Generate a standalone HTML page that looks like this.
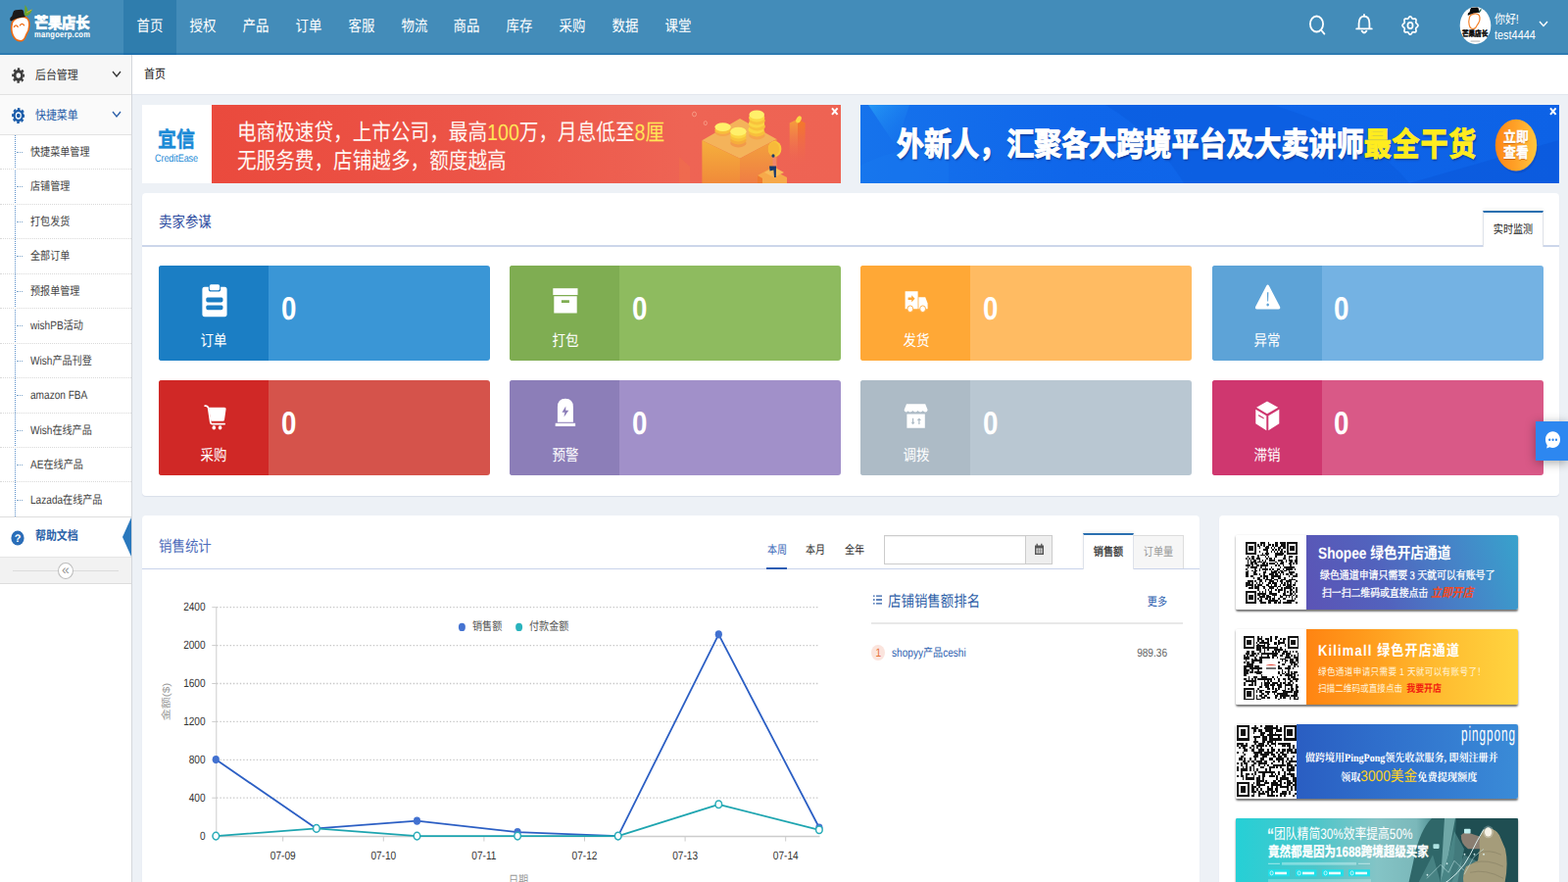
<!DOCTYPE html>
<html lang="zh"><head>
<meta charset="utf-8">
<title>首页</title>
<style>
*{box-sizing:border-box;margin:0;padding:0}
html,body{width:1600px;height:900px;overflow:hidden}
body{font-family:"Liberation Sans","Noto Sans CJK SC",sans-serif;font-size:12px;color:#333;background:#edf1f6;position:relative;text-rendering:geometricPrecision}
.abs{position:absolute}
.nw{white-space:nowrap}
/* header */
#hdr{position:absolute;left:0;top:0;width:1600px;height:56px;background:#438cb9;border-bottom:2px solid #2d7bb1}
#hdr .act{position:absolute;left:126px;top:0;width:54px;height:56px;background:#2f7dad;border-bottom:2px solid #1f70ab}
#hdr .nav{position:absolute;top:0;height:56px;line-height:56px;width:54px;text-align:center;color:#fff;font-size:16px;white-space:nowrap;transform:scaleX(.8408)}
/* sidebar */
#side{position:absolute;left:0;top:56px;width:135px;height:844px;background:#fff;border-right:1px solid #d4d7dc}
#side .top{position:absolute;left:0;width:134px;height:41px;border-bottom:1px solid #e2e2e2;background:#f7f7f7}
#side .top .t{position:absolute;left:36px;top:0;line-height:41.6px;font-size:13px;color:#333;white-space:nowrap}
#side .sub{position:absolute;left:0;width:134px;height:35.45px;border-bottom:1px dotted #d9d9d9}
#side .sub .t{position:absolute;left:31px;top:0;line-height:35px;font-size:12px;color:#444;white-space:nowrap}
#side .sub .d{position:absolute;left:17px;top:17px;width:6px;border-top:1px dotted #7fa6cc}
/* breadcrumb */
#crumb{position:absolute;left:135px;top:56px;width:1465px;height:41px;background:#fff;border-bottom:1px solid #e3e7ee}
.sx{display:inline-block;transform:scaleX(.8408);transform-origin:0 50%;white-space:nowrap}
.sxc{display:inline-block;transform:scaleX(.8408);transform-origin:50% 50%;white-space:nowrap}
.panel{position:absolute;background:#fff;border-radius:3px;box-shadow:0 1px 1px rgba(120,140,180,.18)}
</style>
</head>
<body>

<!-- HEADER -->
<div id="hdr">
  <div class="act"></div>
  <div class="nav" style="left:126px">首页</div>
  <div class="nav" style="left:180px">授权</div>
  <div class="nav" style="left:234px">产品</div>
  <div class="nav" style="left:288px">订单</div>
  <div class="nav" style="left:342px">客服</div>
  <div class="nav" style="left:396px">物流</div>
  <div class="nav" style="left:449px">商品</div>
  <div class="nav" style="left:503px">库存</div>
  <div class="nav" style="left:557px">采购</div>
  <div class="nav" style="left:611px">数据</div>
  <div class="nav" style="left:665px">课堂</div>
  <svg class="abs" style="left:8px;top:3px" width="30" height="42" viewBox="0 0 30 42">
    <path d="M16.8 12.5 L17.6 2 Q20.5 5 20.6 9.2 Q22.6 7 24.8 6.6 Q24 11.5 18.8 13.6z" fill="#6aa32f"></path>
    <path d="M19 10 L24.4 7" stroke="#c9b23a" stroke-width="1"></path>
    <path d="M4.5 20 C7 15 15 12.5 19.5 15.5 C23 18.5 22.5 27 19 32 C17.5 35 17 38.8 13 38.8 C6 38.8 2 30 4.5 20z" fill="#fff" stroke="#f26a10" stroke-width="1.6"></path>
    <path d="M6.4 24.4 Q8.3 21.4 10.2 24.4 M12.4 22.8 Q14.5 19.8 16.6 22.8" fill="none" stroke="#f26a10" stroke-width="1.3" stroke-linecap="round"></path>
    <path d="M2.2 17.6 Q1.6 15.2 4.2 13.6 L5.4 9.4 Q5.8 7.4 7.8 7.2 L14 6.8 Q15.6 6.8 16 8.4 L16.8 12.4 Q18.4 12.8 17.6 14.2 Q10 14.6 3.4 18.4 Q2.6 18.6 2.2 17.6z" fill="#1c1a19"></path>
  </svg>
  <div class="abs nw" style="left:34.5px;top:14px;font-size:16px;line-height:22px;font-weight:bold;color:#fff;transform:scaleX(.89);transform-origin:0 50%;letter-spacing:-.2px;-webkit-text-stroke:.9px #fff">芒果店长</div>
  <div class="abs nw" style="left:35px;top:30px;font-size:9px;line-height:11px;font-weight:bold;color:#fff;transform:scaleX(.84);transform-origin:0 50%;letter-spacing:.3px">mangoerp.com</div>
  <svg class="abs" style="left:1335px;top:13px" width="18" height="23" viewBox="0 0 18 23"><ellipse cx="8.5" cy="11.5" rx="6.6" ry="8" fill="none" stroke="#fff" stroke-width="1.8"></ellipse><path d="M13.4 18 L16.4 21.6" stroke="#fff" stroke-width="1.8" stroke-linecap="round"></path></svg>
  <svg class="abs" style="left:1383px;top:14px" width="18" height="22" viewBox="0 0 18 22"><path d="M1.2 15.4 H16.8 M3.6 15.2 V10 C3.6 5 6 2.6 9 2.6 C12 2.6 14.4 5 14.4 10 V15.2" fill="none" stroke="#fff" stroke-width="1.8" stroke-linecap="round"></path><path d="M9 2.4V1" stroke="#fff" stroke-width="1.8" stroke-linecap="round"></path><path d="M6.6 17.6 Q9 21.4 11.4 17.6" fill="none" stroke="#fff" stroke-width="1.8" stroke-linecap="round"></path></svg>
  <svg class="abs" style="left:1429px;top:15px" width="20" height="22" viewBox="0 0 20 22"><path d="M10.00 1.75 L10.51 1.90 L10.99 2.30 L11.39 2.86 L11.74 3.44 L12.07 3.92 L12.42 4.21 L12.84 4.29 L13.36 4.22 L13.97 4.10 L14.59 4.04 L15.17 4.14 L15.63 4.46 L15.90 4.98 L15.99 5.66 L15.94 6.39 L15.83 7.09 L15.77 7.69 L15.84 8.19 L16.09 8.60 L16.50 8.97 L17.00 9.38 L17.48 9.85 L17.83 10.40 L17.95 11.00 L17.83 11.60 L17.48 12.15 L17.00 12.62 L16.50 13.03 L16.09 13.40 L15.84 13.81 L15.77 14.31 L15.83 14.91 L15.94 15.61 L15.99 16.34 L15.90 17.02 L15.63 17.54 L15.17 17.86 L14.59 17.96 L13.97 17.90 L13.36 17.78 L12.84 17.71 L12.42 17.79 L12.07 18.08 L11.74 18.56 L11.39 19.14 L10.99 19.70 L10.51 20.10 L10.00 20.25 L9.49 20.10 L9.01 19.70 L8.61 19.14 L8.26 18.56 L7.93 18.08 L7.58 17.79 L7.16 17.71 L6.64 17.78 L6.03 17.90 L5.41 17.96 L4.83 17.86 L4.37 17.54 L4.10 17.02 L4.01 16.34 L4.06 15.61 L4.17 14.91 L4.23 14.31 L4.16 13.81 L3.91 13.40 L3.50 13.03 L3.00 12.62 L2.52 12.15 L2.17 11.60 L2.04 11.00 L2.17 10.40 L2.52 9.85 L3.00 9.38 L3.50 8.97 L3.91 8.60 L4.16 8.19 L4.23 7.69 L4.17 7.09 L4.06 6.39 L4.01 5.66 L4.10 4.98 L4.37 4.46 L4.83 4.14 L5.41 4.04 L6.03 4.10 L6.64 4.22 L7.16 4.29 L7.58 4.21 L7.93 3.92 L8.26 3.44 L8.61 2.86 L9.01 2.30 L9.49 1.90z" fill="none" stroke="#fff" stroke-width="1.7" stroke-linejoin="round"></path><ellipse cx="10" cy="11" rx="2.6" ry="3.1" fill="none" stroke="#fff" stroke-width="1.7"></ellipse></svg>
  <svg class="abs" style="left:1489px;top:6px" width="33" height="40" viewBox="0 0 33 40"><ellipse cx="16.5" cy="20" rx="15.8" ry="19" fill="#fff"></ellipse><g transform="translate(0 -2.4)"><path d="M10.5 14 C11.5 10 19 9 20.5 12.5 C22 16 20 20 18 22.5 C17 25 16 26 14 26 C10 26 9 19 10.5 14z" fill="#fff" stroke="#f5822a" stroke-width="1.2"></path><path d="M8.6 11.6 Q8.4 9.4 10.6 8.6 L11.4 5.6 Q11.8 4.2 13.4 4.2 L18 4 Q19.6 4 19.8 5.4 L20.2 7.6 Q21.6 8 21 9.2 Q14 9.4 9.6 12 Q8.8 12.2 8.6 11.6z" fill="#0c0c0c"></path><path d="M19.6 7.8 L22.6 5 Q23 7 21.4 8.6z" fill="#2f6f5e"></path></g><rect x="11.6" y="35.6" width="9.6" height="0.9" fill="#aaa"></rect></svg>
  <div class="abs nw" style="left:1492.3px;top:28.6px;font-size:8px;line-height:11px;font-weight:bold;color:#0c0c0c;transform:scaleX(.82);transform-origin:0 50%;-webkit-text-stroke:.55px #0c0c0c">芒果店长</div>
  <div class="abs nw sx" style="left:1525px;top:11px;font-size:13px;line-height:17px;color:#fff">你好!</div>
  <div class="abs nw sx" style="left:1525px;top:27px;font-size:13px;line-height:17px;color:#fff">test4444</div>
  <svg class="abs" style="left:1570px;top:21px" width="10" height="7" viewBox="0 0 10 7"><path d="M1 1l4 4.4L9 1" fill="none" stroke="#fff" stroke-width="1.4"></path></svg>
</div>

<!-- SIDEBAR -->
<div id="side">
  <div class="top" style="top:0"><div class="t sx">后台管理</div></div>
  <div class="top" style="top:41px;background:#fafafa"><div class="t sx" style="color:#2a5ea8">快捷菜单</div></div>
  <svg class="abs" style="left:11.5px;top:13px" width="13.6" height="16" viewBox="0 0 20 20" preserveAspectRatio="none"><circle cx="10" cy="10" r="7.4" fill="#3d3d3d"></circle><circle cx="10" cy="10" r="8.3" fill="none" stroke="#3d3d3d" stroke-width="3" stroke-dasharray="3.4 3.12" transform="rotate(-11 10 10)"></circle><circle cx="10" cy="10" r="3.4" fill="#f7f7f7"></circle></svg>
  <svg class="abs" style="left:11.5px;top:53.5px" width="13.6" height="16" viewBox="0 0 20 20" preserveAspectRatio="none"><circle cx="10" cy="10" r="7.8" fill="#1c5daa"></circle><circle cx="10" cy="10" r="8.5" fill="none" stroke="#1c5daa" stroke-width="2.8" stroke-dasharray="3.8 2.88" transform="rotate(-11 10 10)"></circle><circle cx="10" cy="10" r="3.7" fill="none" stroke="#fff" stroke-width="1.7"></circle></svg>
  <svg class="abs" style="left:114px;top:16px" width="10" height="8" viewBox="0 0 10 8"><path d="M1 1l4 5 4-5" fill="none" stroke="#333" stroke-width="1.3"></path></svg>
  <svg class="abs" style="left:114px;top:57px" width="10" height="8" viewBox="0 0 10 8"><path d="M1 1l4 5 4-5" fill="none" stroke="#2a5ea8" stroke-width="1.3"></path></svg>
  <div class="abs" style="left:15px;top:82px;width:0;height:389.0px;border-left:1px dotted #5b8fc9"></div>
  <div class="sub" style="top:82.00px"><div class="d"></div><div class="t sx">快捷菜单管理</div></div>
  <div class="sub" style="top:117.45px"><div class="d"></div><div class="t sx">店铺管理</div></div>
  <div class="sub" style="top:152.90px"><div class="d"></div><div class="t sx">打包发货</div></div>
  <div class="sub" style="top:188.35px"><div class="d"></div><div class="t sx">全部订单</div></div>
  <div class="sub" style="top:223.80px"><div class="d"></div><div class="t sx">预报单管理</div></div>
  <div class="sub" style="top:259.25px"><div class="d"></div><div class="t sx">wishPB活动</div></div>
  <div class="sub" style="top:294.70px"><div class="d"></div><div class="t sx">Wish产品刊登</div></div>
  <div class="sub" style="top:330.15px"><div class="d"></div><div class="t sx">amazon FBA</div></div>
  <div class="sub" style="top:365.60px"><div class="d"></div><div class="t sx">Wish在线产品</div></div>
  <div class="sub" style="top:401.05px"><div class="d"></div><div class="t sx">AE在线产品</div></div>
  <div class="sub" style="top:436.50px;border-bottom:1px solid #dedede"><div class="d"></div><div class="t sx">Lazada在线产品</div></div>
  <div class="abs" style="left:0;top:471.95px;width:134px;height:40px;background:#fff"><svg class="abs" style="left:11px;top:13px" width="14" height="16" viewBox="0 0 14 16"><ellipse cx="7" cy="8" rx="6.6" ry="7.6" fill="#2a6db8"></ellipse><text x="7" y="12.3" font-family="Liberation Sans" font-weight="bold" font-size="11" fill="#fff" text-anchor="middle">?</text></svg><div class="abs nw sx" style="left:36px;top:0;line-height:38px;font-size:13px;color:#2a62a8;font-weight:bold">帮助文档</div><div class="abs" style="left:125px;top:0;width:0;height:0;border-top:20px solid transparent;border-bottom:20px solid transparent;border-right:9px solid #2a78bd"></div></div>
  <div class="abs" style="left:0;top:511.95px;width:134px;height:28px;background:#f2f2f2;border-top:1px solid #e5e5e5;border-bottom:1px solid #ddd"><div class="abs" style="left:13px;top:13px;width:108px;border-top:1px solid #dcdcdc"></div><div class="abs" style="left:59px;top:5px;width:16px;height:17px;border:1px solid #bbb;border-radius:50%;background:#fff;text-align:center;line-height:12px;font-size:14px;color:#999">«</div></div>
</div>

<!-- BREADCRUMB -->
<div id="crumb"><div class="abs nw sx" style="left:12px;top:0;line-height:40.4px;font-size:13px;color:#111">首页</div></div>

<!-- BANNERS -->
<div class="abs" style="left:145px;top:107px;width:713px;height:79.5px;background:#fff;overflow:hidden">
  <div class="abs nw" style="left:16px;top:23px;font-size:22px;line-height:26px;font-weight:bold;color:#1b8ad6;transform:scaleX(.86);transform-origin:0 50%;-webkit-text-stroke:.5px #1b8ad6">宜信</div>
  <div class="abs nw" style="left:12.5px;top:47.5px;font-size:10.8px;line-height:14px;color:#1b8ad6;transform:scaleX(.84);transform-origin:0 50%;letter-spacing:-.1px">CreditEase</div>
  <div class="abs" style="left:71px;top:0;width:642px;height:80px;background:linear-gradient(90deg,#ea4a3d 0%,#ec5548 45%,#ee6454 75%,#ee6353 100%)">
    <svg class="abs" style="left:0;top:0" width="642" height="80" viewBox="216 107 642 80">
      <defs>
        <linearGradient id="cl" x1="0" y1="0" x2="0" y2="1"><stop offset="0" stop-color="#f5b03c"></stop><stop offset="1" stop-color="#f08a3a"></stop></linearGradient>
        <linearGradient id="cr" x1="0" y1="0" x2="0" y2="1"><stop offset="0" stop-color="#f3a33c"></stop><stop offset="1" stop-color="#ef7d44"></stop></linearGradient>
        <linearGradient id="pl" x1="0" y1="0" x2="0" y2="1"><stop offset="0" stop-color="#f6a13a"></stop><stop offset="1" stop-color="#ee6a50" stop-opacity="0"></stop></linearGradient>
        <linearGradient id="pr" x1="0" y1="0" x2="0" y2="1"><stop offset="0" stop-color="#f57a26"></stop><stop offset="1" stop-color="#ee6a50" stop-opacity="0"></stop></linearGradient>
      </defs>
      <ellipse cx="708.5" cy="116.5" rx="2" ry="2.3" fill="none" stroke="#f7a58e" stroke-width=".8"></ellipse>
      <ellipse cx="719.8" cy="125.6" rx="1.6" ry="2" fill="none" stroke="#f7a58e" stroke-width=".8"></ellipse>
      <path d="M693 160 L704 170 L704 187 L693 187z" fill="#f0704a" opacity=".55"></path>
      <!-- cube -->
      <path d="M755 121 L792.5 142 L755 161.7 L716.4 143.3z" fill="#f4b35a"></path>
      <path d="M716.4 143.3 L755 161.7 L755 187 L716.4 187z" fill="url(#cl)"></path>
      <path d="M755 161.7 L792.5 142 L792.5 187 L755 187z" fill="url(#cr)"></path>
      <!-- coins -->
      <g>
        <ellipse cx="737.6" cy="134.6" rx="8.2" ry="4.4" fill="#f6a54a"></ellipse>
        <ellipse cx="737.6" cy="132.4" rx="8.2" ry="4.4" fill="#f8bf3c"></ellipse>
        <ellipse cx="737.6" cy="129.6" rx="8.2" ry="4.4" fill="#fff06a"></ellipse>
        <ellipse cx="753.4" cy="146" rx="8.2" ry="4.4" fill="#f29a4a"></ellipse>
        <ellipse cx="753.4" cy="143" rx="8.2" ry="4.4" fill="#f6ad3c"></ellipse>
        <ellipse cx="753.4" cy="140" rx="8.2" ry="4.4" fill="#f8c23c"></ellipse>
        <ellipse cx="753.4" cy="137" rx="8.2" ry="4.4" fill="#fbd744"></ellipse>
        <ellipse cx="753.4" cy="134.2" rx="8.2" ry="4.4" fill="#fff06a"></ellipse>
        <ellipse cx="772.4" cy="138" rx="8.2" ry="4.4" fill="#f6a54a"></ellipse>
        <ellipse cx="772.4" cy="135" rx="8.2" ry="4.4" fill="#f8bf3c"></ellipse>
        <ellipse cx="771.6" cy="132" rx="8.2" ry="4.4" fill="#fbd744"></ellipse>
        <ellipse cx="772.8" cy="129" rx="8.2" ry="4.4" fill="#f8c23c"></ellipse>
        <ellipse cx="772" cy="126" rx="8.2" ry="4.4" fill="#fbd744"></ellipse>
        <ellipse cx="772.6" cy="123" rx="8.2" ry="4.4" fill="#f8c23c"></ellipse>
        <ellipse cx="772.2" cy="120" rx="8.2" ry="4.4" fill="#fbd744"></ellipse>
        <ellipse cx="772.2" cy="117" rx="7.8" ry="4.6" fill="#fff06a"></ellipse>
      </g>
      <!-- stairs -->
      <path d="M773 179 L786 172 L803 181 L803 187 L773 187z" fill="#f6a94a"></path>
      <path d="M773 179 L778 182 L778 187 L773 187z" fill="#ef7a30"></path>
      <path d="M780 176 L790 170.6 L800 176 L790 181z" fill="#f8bb5a"></path>
      <!-- person + coin -->
      <ellipse cx="790.6" cy="152" rx="6.8" ry="8" fill="#f9c93c"></ellipse>
      <ellipse cx="789.6" cy="152" rx="5.6" ry="7" fill="#f7b93a"></ellipse>
      <path d="M788.4 160 L791.6 160 L792.4 170 L788.6 170z" fill="#f2866a"></path>
      <ellipse cx="789" cy="159" rx="1.6" ry="1.8" fill="#1a3a6a"></ellipse>
      <path d="M785 169.4 L792 169.4 L791.8 181 L790 181 L789.4 173.6 L785.6 174.6z" fill="#16396d"></path>
      <!-- pillar -->
      <path d="M805.7 125.5 L814 121.5 L814 168 L805.7 168z" fill="url(#pl)"></path>
      <path d="M814 121.5 L821.6 125.5 L821.6 168 L814 168z" fill="url(#pr)"></path>
      <ellipse cx="815" cy="121.8" rx="2.4" ry="3.8" transform="rotate(28 815 121.8)" fill="#fbd744"></ellipse>
      <!-- close -->
      <path d="M849 110.4 L854.6 116.8 M854.6 110.4 L849 116.8" stroke="#fff" stroke-width="2"></path>
    </svg>
    <div class="abs nw" style="left:26.3px;top:14.2px;font-size:23.4px;line-height:28px;color:#fff6f2;transform:scaleX(.839);transform-origin:0 50%">电商极速贷，上市公司，最高<span style="color:#ffe457">100</span>万，月息低至<span style="color:#ffe457">8厘</span></div>
    <div class="abs nw" style="left:26.3px;top:42.7px;font-size:23.4px;line-height:28px;color:#fff6f2;transform:scaleX(.839);transform-origin:0 50%">无服务费，店铺越多，额度越高</div>
  </div>
</div>
<div class="abs" style="left:878px;top:107px;width:713px;height:79.5px;background:linear-gradient(90deg,#1673ec 0%,#0f66ea 30%,#0d62e6 100%);overflow:hidden">
  <svg class="abs" style="left:0;top:0" width="712" height="80" viewBox="0 0 712 80">
    <defs><linearGradient id="st" x1="0" y1="0" x2="1" y2="1"><stop offset="0" stop-color="#2aa4f8"></stop><stop offset="1" stop-color="#1673ec" stop-opacity="0"></stop></linearGradient>
    <linearGradient id="ob" x1="0" y1="0" x2="1" y2="0"><stop offset="0" stop-color="#ff8616"></stop><stop offset=".5" stop-color="#ffa228"></stop><stop offset="1" stop-color="#ffc63e"></stop></linearGradient></defs>
    <path d="M8 0 L50 0 L36 42z" fill="url(#st)" opacity=".75"></path>
    <path d="M0 62 Q40 40 90 44 L90 80 L0 80z" fill="#1a7af0" opacity=".35"></path>
    <path d="M420 0 Q520 30 560 80 L330 80 Q300 30 250 0z" fill="#0a55d8" opacity=".35"></path><path d="M560 80 L713 36 L713 80z" fill="#0a4fd0" opacity=".35"></path><ellipse cx="670" cy="43.4" rx="21.4" ry="26.4" fill="#0b3fae" opacity=".35"></ellipse>
    <ellipse cx="669" cy="41.2" rx="21.2" ry="26.4" fill="url(#ob)"></ellipse>
    <path d="M704 3.4 L709.6 9.8 M709.6 3.4 L704 9.8" stroke="#fff" stroke-width="2"></path>
  </svg>
  <div class="abs nw" style="left:37px;top:21.8px;font-size:33.5px;line-height:40px;font-weight:bold;color:#fff;transform:scaleX(.837);transform-origin:0 50%;text-shadow:1px 2px 2px #0a3a9c;-webkit-text-stroke:1.1px #fff">外新人，汇聚各大跨境平台及大卖讲师<span style="color:#ffec1f;-webkit-text-stroke:1.1px #ffec1f;letter-spacing:1px">最全干货</span></div>
  <div class="abs nw" style="left:649px;top:25.8px;width:40px;text-align:center;font-size:15px;line-height:16.6px;font-weight:bold;color:#fff;transform:scaleX(.86);text-shadow:0 1px 1px #c8640e;-webkit-text-stroke:.4px #fff">立即<br>查看</div>
</div>

<!-- SELLER PANEL -->
<div class="panel" id="p1" style="left:145px;top:196.5px;width:1446px;height:309.5px;border-radius:4px">
  <div class="abs nw sx" style="left:16.5px;top:20.8px;font-size:16px;line-height:22px;color:#2b4a9e">卖家参谋</div>
  <div class="abs" style="left:0;top:53.5px;width:1446px;height:1.5px;background:#ccd6ea"></div>
  <div class="abs" style="left:1367.5px;top:18px;width:62.5px;height:37px;border:1px solid #dfe3ea;border-top:2px solid #2a6fb0;border-bottom:none;background:#fff;box-shadow:0 -2px 3px rgba(0,0,0,.06)"><div class="abs nw" style="left:0;width:60.5px;top:0;line-height:34.5px;font-size:12px;color:#222;text-align:center"><span class="sxc" style="width: 48px;">实时监测</span></div></div>
  <div class="abs" style="left:16.8px;top:74.3px;width:338px;height:97px;background:#3a96d6;border-radius:3px;overflow:hidden"><div class="abs" style="left:0;top:0;width:112px;height:97px;background:#1b7ec4"></div><svg class="abs" style="left:0;top:0" width="112" height="97" viewBox="161.8 270.8 112 97"><path d="M208.6 292.6 H212.6 V294.8 Q212.6 297.4 215 297.4 H222.6 Q225 297.4 225 294.8 V292.6 H229 Q231.4 292.6 231.4 295.2 V320.4 Q231.4 323 229 323 H208.6 Q206.2 323 206.2 320.4 V295.2 Q206.2 292.6 208.6 292.6z M211.6 303.4 Q210 303.4 210 305.8 Q210 308.2 211.6 308.2 H225.8 Q227.4 308.2 227.4 305.8 Q227.4 303.4 225.8 303.4z M211.6 311.2 Q210 311.2 210 313.6 Q210 316 211.6 316 H225.8 Q227.4 316 227.4 313.6 Q227.4 311.2 225.8 311.2z" fill="#fff" fill-rule="evenodd"></path><path d="M215.2 290 H222.4 Q224 290 224 291.8 V294.2 Q224 296 222.4 296 H215.2 Q213.6 296 213.6 294.2 V291.8 Q213.6 290 215.2 290z" fill="#fff"></path></svg><div class="abs nw" style="left:0;top:67px;width:113px;text-align:center;font-size:16px;line-height:22px;color:#fff"><span class="sxc" style="width: 32px;">订单</span></div><div class="abs nw" style="left:124.8px;top:22px;font-size:33px;line-height:44px;font-weight:bold;color:#fff;transform:scaleX(.8408);transform-origin:0 50%">0</div></div>
  <div class="abs" style="left:375.1px;top:74.3px;width:338px;height:97px;background:#8ebb5f;border-radius:3px;overflow:hidden"><div class="abs" style="left:0;top:0;width:112px;height:97px;background:#7fad52"></div><svg class="abs" style="left:0;top:0" width="112" height="97" viewBox="520.1 270.8 112 97"><rect x="564.4" y="294" width="25.2" height="6.8" fill="#fff"></rect><path d="M565.4 302 H588.8 V319.2 H565.4z M573 306 V308.8 H581 V306z" fill="#fff" fill-rule="evenodd"></path></svg><div class="abs nw" style="left:0;top:67px;width:113px;text-align:center;font-size:16px;line-height:22px;color:#fff"><span class="sxc" style="width: 32px;">打包</span></div><div class="abs nw" style="left:124.8px;top:22px;font-size:33px;line-height:44px;font-weight:bold;color:#fff;transform:scaleX(.8408);transform-origin:0 50%">0</div></div>
  <div class="abs" style="left:733.4px;top:74.3px;width:338px;height:97px;background:#ffbb62;border-radius:3px;overflow:hidden"><div class="abs" style="left:0;top:0;width:112px;height:97px;background:#ffa836"></div><svg class="abs" style="left:0;top:0" width="112" height="97" viewBox="878.4 270.8 112 97"><path d="M924 297 H937 V315 H924z M927 303.2 V305.8 H930.6 V308 L934 304.5 L930.6 301 V303.2z" fill="#fff" fill-rule="evenodd"></path><path d="M937.8 303 H944.6 L947 309.4 V315 H937.8z" fill="#fff"></path><ellipse cx="929.2" cy="315" rx="2.9" ry="3.3" fill="#fff" stroke="#ffa838" stroke-width=".9"></ellipse><ellipse cx="942" cy="315" rx="2.9" ry="3.3" fill="#fff" stroke="#ffa838" stroke-width=".9"></ellipse></svg><div class="abs nw" style="left:0;top:67px;width:113px;text-align:center;font-size:16px;line-height:22px;color:#fff"><span class="sxc" style="width: 32px;">发货</span></div><div class="abs nw" style="left:124.8px;top:22px;font-size:33px;line-height:44px;font-weight:bold;color:#fff;transform:scaleX(.8408);transform-origin:0 50%">0</div></div>
  <div class="abs" style="left:1091.7px;top:74.3px;width:338px;height:97px;background:#74b2e3;border-radius:3px;overflow:hidden"><div class="abs" style="left:0;top:0;width:112px;height:97px;background:#5da3d7"></div><svg class="abs" style="left:0;top:0" width="112" height="97" viewBox="1236.7 270.8 112 97"><path d="M1292 291.4 Q1293.3 289.4 1294.6 291.4 L1305.8 312.8 Q1306.6 315.2 1304.4 315.4 H1282.2 Q1280 315.2 1280.8 312.8z M1292.6 298 L1292.9 307.4 H1293.8 L1294.1 298z M1293.35 309.4 a1.25 1.5 0 1 0 .01 0z" fill="#fff" fill-rule="evenodd"></path></svg><div class="abs nw" style="left:0;top:67px;width:113px;text-align:center;font-size:16px;line-height:22px;color:#fff"><span class="sxc" style="width: 32px;">异常</span></div><div class="abs nw" style="left:124.8px;top:22px;font-size:33px;line-height:44px;font-weight:bold;color:#fff;transform:scaleX(.8408);transform-origin:0 50%">0</div></div>
  <div class="abs" style="left:16.8px;top:191.7px;width:338px;height:97px;background:#d5534b;border-radius:3px;overflow:hidden"><div class="abs" style="left:0;top:0;width:112px;height:97px;background:#d02826"></div><svg class="abs" style="left:0;top:0" width="112" height="97" viewBox="161.8 388.2 112 97"><path d="M209 414.4 Q211.6 413.8 212.4 416.4 L214.6 431 Q214.8 432.8 216.4 432.8 H229" fill="none" stroke="#fff" stroke-width="1.7" stroke-linecap="round"></path><path d="M212.6 416 H229 Q230.6 416 230.4 417.6 L228.8 428.6 Q228.6 430 227.2 430 H215.2z" fill="#fff"></path><ellipse cx="218.1" cy="436.6" rx="1.8" ry="2.1" fill="#fff"></ellipse><ellipse cx="224.4" cy="436.6" rx="1.8" ry="2.1" fill="#fff"></ellipse></svg><div class="abs nw" style="left:0;top:67px;width:113px;text-align:center;font-size:16px;line-height:22px;color:#fff"><span class="sxc" style="width: 32px;">采购</span></div><div class="abs nw" style="left:124.8px;top:22px;font-size:33px;line-height:44px;font-weight:bold;color:#fff;transform:scaleX(.8408);transform-origin:0 50%">0</div></div>
  <div class="abs" style="left:375.1px;top:191.7px;width:338px;height:97px;background:#a190c9;border-radius:3px;overflow:hidden"><div class="abs" style="left:0;top:0;width:112px;height:97px;background:#8c7eb8"></div><svg class="abs" style="left:0;top:0" width="112" height="97" viewBox="520.1 388.2 112 97"><path d="M569 431 V415.6 Q569 407 577 407 Q585 407 585 415.6 V431z M577.4 414.6 L573.6 421 H576.4 L575.6 425.8 L580.4 419 H577.4z" fill="#fff" fill-rule="evenodd"></path><rect x="566.8" y="432" width="20.4" height="3.2" fill="#fff"></rect></svg><div class="abs nw" style="left:0;top:67px;width:113px;text-align:center;font-size:16px;line-height:22px;color:#fff"><span class="sxc" style="width: 32px;">预警</span></div><div class="abs nw" style="left:124.8px;top:22px;font-size:33px;line-height:44px;font-weight:bold;color:#fff;transform:scaleX(.8408);transform-origin:0 50%">0</div></div>
  <div class="abs" style="left:733.4px;top:191.7px;width:338px;height:97px;background:#b9c7d2;border-radius:3px;overflow:hidden"><div class="abs" style="left:0;top:0;width:112px;height:97px;background:#adbbc6"></div><svg class="abs" style="left:0;top:0" width="112" height="97" viewBox="878.4 388.2 112 97"><path d="M925.4 412.4 H944.6 L947 418.4 Q946.6 420.8 944.4 420.6 Q942.8 420.4 942.2 419.2 Q941.4 420.6 939.6 420.6 Q937.8 420.6 937 419.2 Q936.2 420.6 934.4 420.6 Q932.6 420.6 931.8 419.2 Q931 420.6 929.2 420.6 Q927.6 420.6 927 419.4 Q926.2 420.6 925 420.6 Q923 420.4 923 418.4z" fill="#fff"></path><path d="M925.8 422.8 H944.2 V437 H925.8z M931.4 427 V431 H930 L932 433.4 L934 431 H932.6 V427z M938.3 426.6 L936.2 429.2 H937.7 V433.2 H938.9 V429.2 H940.4z" fill="#fff" fill-rule="evenodd"></path></svg><div class="abs nw" style="left:0;top:67px;width:113px;text-align:center;font-size:16px;line-height:22px;color:#fff"><span class="sxc" style="width: 32px;">调拨</span></div><div class="abs nw" style="left:124.8px;top:22px;font-size:33px;line-height:44px;font-weight:bold;color:#fff;transform:scaleX(.8408);transform-origin:0 50%">0</div></div>
  <div class="abs" style="left:1091.7px;top:191.7px;width:338px;height:97px;background:#d95987;border-radius:3px;overflow:hidden"><div class="abs" style="left:0;top:0;width:112px;height:97px;background:#cf376f"></div><svg class="abs" style="left:0;top:0" width="112" height="97" viewBox="1236.7 388.2 112 97"><path d="M1292.7 409.8 L1303.9 416 L1292.7 422.4 L1281.8 416z" fill="#fff"></path><path d="M1281 418 L1292 424.4 V439.4 L1281 432.4z M1283.9 423.2 V424.6 L1289.4 427.8 V426.4z" fill="#fff" fill-rule="evenodd"></path><path d="M1294 424.4 L1305 418 V432.4 L1294 439.4z" fill="#fff"></path></svg><div class="abs nw" style="left:0;top:67px;width:113px;text-align:center;font-size:16px;line-height:22px;color:#fff"><span class="sxc" style="width: 32px;">滞销</span></div><div class="abs nw" style="left:124.8px;top:22px;font-size:33px;line-height:44px;font-weight:bold;color:#fff;transform:scaleX(.8408);transform-origin:0 50%">0</div></div>
</div>

<!-- SALES PANEL -->
<div class="panel" id="p2" style="left:145px;top:525.5px;width:1079px;height:380px;border-radius:4px">
  <div class="abs nw sx" style="left:16.5px;top:22px;font-size:16px;line-height:22px;color:#4d6cba">销售统计</div>
  <div class="abs" style="left:0;top:54px;width:1079px;height:1.5px;background:#c9d3ea"></div>
  <div class="abs nw sx" style="left:637.5px;top:27px;font-size:12px;line-height:17px;color:#3b69b9">本周</div>
  <div class="abs nw sx" style="left:677.3px;top:27px;font-size:12px;line-height:17px;color:#333">本月</div>
  <div class="abs nw sx" style="left:717.1px;top:27px;font-size:12px;line-height:17px;color:#333">全年</div>
  <div class="abs" style="left:637px;top:53.5px;width:21px;height:2px;background:#2d5db3"></div>
  <div class="abs" style="left:757px;top:20px;width:145px;height:30px;border:1px solid #ccc;background:#fff;box-shadow:inset 0 1px 1px rgba(0,0,0,.06)"></div>
  <div class="abs" style="left:901px;top:20px;width:28px;height:30px;border:1px solid #ccc;background:#eee"><svg class="abs" style="left:8px;top:7.5px" width="11" height="13" viewBox="0 0 11 13"><path d="M1 2.6 H10 V12 H1z M2.4 5.4 V10.6 H8.6 V5.4z" fill="#555" fill-rule="evenodd"></path><path d="M3.2 .8 V3.4 M7.8 .8 V3.4" stroke="#555" stroke-width="1.3"></path><path d="M4.4 5.4 V10.6 M6.6 5.4 V10.6 M2.4 7.2 H8.6 M2.4 8.9 H8.6" stroke="#555" stroke-width=".5"></path></svg></div>
  <div class="abs" style="left:960px;top:18.5px;width:51.5px;height:37px;border:1px solid #dfe3ea;border-top:2px solid #2a6fb0;border-bottom:none;background:#fff;box-shadow:0 -2px 3px rgba(0,0,0,.05)"><div class="abs nw" style="left:0;width:49.5px;top:1px;line-height:33px;font-size:12px;color:#333;text-align:center;-webkit-text-stroke:.3px #333"><span class="sxc" style="width: 36px;">销售额</span></div></div>
  <div class="abs" style="left:1011.5px;top:20px;width:51.5px;height:34px;border:1px solid #ddd;border-bottom:none;border-left:none;background:#f6f6f6"><div class="abs nw" style="left:0;width:50.5px;top:0;line-height:33px;font-size:12px;color:#999;text-align:center"><span class="sxc" style="width: 36px;">订单量</span></div></div>
  <svg class="abs" style="left:746px;top:81.5px" width="9" height="10" viewBox="0 0 9 10"><path d="M0 1.2h1.6M0 5h1.6M0 8.8h1.6M3 1.2h6M3 5h6M3 8.8h6" stroke="#2f5fa8" stroke-width="1.3"></path></svg>
  <div class="abs nw sx" style="left:760.5px;top:78.6px;font-size:16px;line-height:22px;color:#2f5fa8">店铺销售额排名</div>
  <div class="abs nw" style="left:985px;top:80.8px;width:61px;text-align:right;font-size:12px;line-height:17px;color:#2f62b0;transform:scaleX(.8408);transform-origin:100% 50%">更多</div>
  <div class="abs" style="left:744px;top:109.5px;width:318px;height:1.5px;background:#e8e8e8"></div>
  <div class="abs" style="left:744px;top:132px;width:14px;height:16px;border-radius:50%;background:#fbe4dd;text-align:center;line-height:16px;font-size:12px;color:#e8733a"><span class="sxc">1</span></div>
  <div class="abs nw sx" style="left:765px;top:132px;font-size:12px;line-height:17px;color:#2f62b0">shopyy产品ceshi</div>
  <div class="abs nw" style="left:945px;top:132.5px;width:101px;text-align:right;font-size:12px;line-height:17px;color:#666;transform:scaleX(.8408);transform-origin:100% 50%">989.36</div>
  <svg class="abs" style="left:0;top:0" width="1079" height="376" viewBox="145.0 525.5 1079 376" font-family="Liberation Sans, sans-serif"><path d="M216.3 852.6 H220.8" stroke="#ccc" stroke-width="1"></path><text x="0" y="0" transform="translate(209.6 856.0) scale(.8408 1)" text-anchor="end" font-size="12" fill="#333">0</text><path d="M221 813.7 H836" stroke="#c8c8c8" stroke-width="1.3" stroke-dasharray="1.4 2"></path><path d="M216.3 813.7 H220.8" stroke="#ccc" stroke-width="1"></path><text x="0" y="0" transform="translate(209.6 817.1) scale(.8408 1)" text-anchor="end" font-size="12" fill="#333">400</text><path d="M221 774.8 H836" stroke="#c8c8c8" stroke-width="1.3" stroke-dasharray="1.4 2"></path><path d="M216.3 774.8 H220.8" stroke="#ccc" stroke-width="1"></path><text x="0" y="0" transform="translate(209.6 778.2) scale(.8408 1)" text-anchor="end" font-size="12" fill="#333">800</text><path d="M221 735.9 H836" stroke="#c8c8c8" stroke-width="1.3" stroke-dasharray="1.4 2"></path><path d="M216.3 735.9 H220.8" stroke="#ccc" stroke-width="1"></path><text x="0" y="0" transform="translate(209.6 739.3) scale(.8408 1)" text-anchor="end" font-size="12" fill="#333">1200</text><path d="M221 697.0 H836" stroke="#c8c8c8" stroke-width="1.3" stroke-dasharray="1.4 2"></path><path d="M216.3 697.0 H220.8" stroke="#ccc" stroke-width="1"></path><text x="0" y="0" transform="translate(209.6 700.4) scale(.8408 1)" text-anchor="end" font-size="12" fill="#333">1600</text><path d="M221 658.1 H836" stroke="#c8c8c8" stroke-width="1.3" stroke-dasharray="1.4 2"></path><path d="M216.3 658.1 H220.8" stroke="#ccc" stroke-width="1"></path><text x="0" y="0" transform="translate(209.6 661.5) scale(.8408 1)" text-anchor="end" font-size="12" fill="#333">2000</text><path d="M221 619.2 H836" stroke="#c8c8c8" stroke-width="1.3" stroke-dasharray="1.4 2"></path><path d="M216.3 619.2 H220.8" stroke="#ccc" stroke-width="1"></path><text x="0" y="0" transform="translate(209.6 622.6) scale(.8408 1)" text-anchor="end" font-size="12" fill="#333">2400</text><path d="M220.8 619 V853.6" stroke="#ccc" stroke-width="1"></path><path d="M220.3 853 H836.5" stroke="#ccc" stroke-width="1.6"></path><path d="M288.7 853 V858" stroke="#ccc" stroke-width="1"></path><text x="0" y="0" transform="translate(288.7 876.1) scale(.8408 1)" text-anchor="middle" font-size="12" fill="#333">07-09</text><path d="M391.3 853 V858" stroke="#ccc" stroke-width="1"></path><text x="0" y="0" transform="translate(391.3 876.1) scale(.8408 1)" text-anchor="middle" font-size="12" fill="#333">07-10</text><path d="M493.9 853 V858" stroke="#ccc" stroke-width="1"></path><text x="0" y="0" transform="translate(493.9 876.1) scale(.8408 1)" text-anchor="middle" font-size="12" fill="#333">07-11</text><path d="M596.5 853 V858" stroke="#ccc" stroke-width="1"></path><text x="0" y="0" transform="translate(596.5 876.1) scale(.8408 1)" text-anchor="middle" font-size="12" fill="#333">07-12</text><path d="M699.1 853 V858" stroke="#ccc" stroke-width="1"></path><text x="0" y="0" transform="translate(699.1 876.1) scale(.8408 1)" text-anchor="middle" font-size="12" fill="#333">07-13</text><path d="M801.7 853 V858" stroke="#ccc" stroke-width="1"></path><text x="0" y="0" transform="translate(801.7 876.1) scale(.8408 1)" text-anchor="middle" font-size="12" fill="#333">07-14</text><ellipse cx="471.4" cy="639.4" rx="3.5" ry="4.2" fill="#4573d1"></ellipse><ellipse cx="529.6" cy="639.4" rx="3.5" ry="4.2" fill="#2ab3bd"></ellipse><polyline points="220.3,774.6 322.9,844.9 425.5,837.2 528.1,848.6 630.7,852.6 733.3,646.8 835.9,844.0" fill="none" stroke="#2c5fc4" stroke-width="1.8" stroke-linejoin="round"></polyline><ellipse cx="220.3" cy="774.6" rx="3.6" ry="4.1" fill="#4271d0"></ellipse><ellipse cx="322.9" cy="844.9" rx="3.6" ry="4.1" fill="#4271d0"></ellipse><ellipse cx="425.5" cy="837.2" rx="3.6" ry="4.1" fill="#4271d0"></ellipse><ellipse cx="528.1" cy="848.6" rx="3.6" ry="4.1" fill="#4271d0"></ellipse><ellipse cx="630.7" cy="852.6" rx="3.6" ry="4.1" fill="#4271d0"></ellipse><ellipse cx="733.3" cy="646.8" rx="3.6" ry="4.1" fill="#4271d0"></ellipse><ellipse cx="835.9" cy="844.0" rx="3.6" ry="4.1" fill="#4271d0"></ellipse><polyline points="220.3,852.6 322.9,844.9 425.5,852.6 528.1,852.6 630.7,852.6 733.3,820.3 835.9,846.3" fill="none" stroke="#1ea5b0" stroke-width="1.8" stroke-linejoin="round"></polyline><ellipse cx="220.3" cy="852.6" rx="3.3" ry="3.8" fill="#fff" stroke="#29adb8" stroke-width="1.5"></ellipse><ellipse cx="322.9" cy="844.9" rx="3.3" ry="3.8" fill="#fff" stroke="#29adb8" stroke-width="1.5"></ellipse><ellipse cx="425.5" cy="852.6" rx="3.3" ry="3.8" fill="#fff" stroke="#29adb8" stroke-width="1.5"></ellipse><ellipse cx="528.1" cy="852.6" rx="3.3" ry="3.8" fill="#fff" stroke="#29adb8" stroke-width="1.5"></ellipse><ellipse cx="630.7" cy="852.6" rx="3.3" ry="3.8" fill="#fff" stroke="#29adb8" stroke-width="1.5"></ellipse><ellipse cx="733.3" cy="820.3" rx="3.3" ry="3.8" fill="#fff" stroke="#29adb8" stroke-width="1.5"></ellipse><ellipse cx="835.9" cy="846.3" rx="3.3" ry="3.8" fill="#fff" stroke="#29adb8" stroke-width="1.5"></ellipse></svg><div class="abs nw sx" style="left:337px;top:106.9px;font-size:12px;line-height:14px;color:#555">销售额</div><div class="abs nw sx" style="left:395px;top:106.9px;font-size:12px;line-height:14px;color:#555">付款金额</div><div class="abs nw" style="left:333.5px;top:365.7px;width:100px;text-align:center;font-size:12px;line-height:14px;color:#999;transform:scaleX(.8408)">日期</div><div class="abs nw" style="left:-25.5px;top:183.5px;width:100px;text-align:center;font-size:12px;line-height:14px;color:#999;transform:rotate(-90deg) scaleY(.8408)">金额($)</div>
</div>

<!-- PROMO PANEL -->
<div class="panel" id="p3" style="left:1244px;top:525.5px;width:347px;height:380px;border-radius:4px">
  <div class="abs" style="left:17px;top:20.3px;width:287.5px;height:76.0px;border-radius:2px;background:linear-gradient(#fff,#fff) 0 0/71px 100% no-repeat,linear-gradient(72deg,#5b55b6 25%,#5262bd 50%,#4585c8 78%,#38a2cc 100%);box-shadow:0 1.5px 2px rgba(0,0,0,.55);overflow:hidden"><div class="abs" style="left:0;top:0;width:72px;height:76px;background:#fff"></div><svg class="abs" style="left:10.0px;top:7.4px" width="53.0" height="62.6" viewBox="0 0 35 35" preserveAspectRatio="none" shape-rendering="crispEdges"><path d="M0 0h7v1h-7zM10 0h3v1h-3zM15 0h1v1h-1zM20 0h2v1h-2zM23 0h4v1h-4zM28 0h7v1h-7zM0 1h1v1h-1zM6 1h1v1h-1zM8 1h1v1h-1zM10 1h1v1h-1zM12 1h1v1h-1zM15 1h2v1h-2zM18 1h1v1h-1zM20 1h2v1h-2zM24 1h3v1h-3zM28 1h1v1h-1zM34 1h1v1h-1zM0 2h1v1h-1zM2 2h3v1h-3zM6 2h1v1h-1zM8 2h2v1h-2zM12 2h1v1h-1zM14 2h2v1h-2zM18 2h1v1h-1zM20 2h2v1h-2zM23 2h4v1h-4zM28 2h1v1h-1zM30 2h3v1h-3zM34 2h1v1h-1zM0 3h1v1h-1zM2 3h3v1h-3zM6 3h1v1h-1zM9 3h1v1h-1zM13 3h3v1h-3zM17 3h1v1h-1zM19 3h1v1h-1zM22 3h2v1h-2zM25 3h2v1h-2zM28 3h1v1h-1zM30 3h3v1h-3zM34 3h1v1h-1zM0 4h1v1h-1zM2 4h3v1h-3zM6 4h1v1h-1zM12 4h3v1h-3zM18 4h1v1h-1zM20 4h1v1h-1zM22 4h1v1h-1zM24 4h1v1h-1zM28 4h1v1h-1zM30 4h3v1h-3zM34 4h1v1h-1zM0 5h1v1h-1zM6 5h1v1h-1zM9 5h1v1h-1zM14 5h1v1h-1zM17 5h1v1h-1zM19 5h1v1h-1zM21 5h1v1h-1zM23 5h2v1h-2zM26 5h1v1h-1zM28 5h1v1h-1zM34 5h1v1h-1zM0 6h7v1h-7zM11 6h1v1h-1zM13 6h3v1h-3zM20 6h6v1h-6zM28 6h7v1h-7zM8 7h1v1h-1zM10 7h3v1h-3zM14 7h1v1h-1zM20 7h5v1h-5zM26 7h1v1h-1zM1 8h1v1h-1zM4 8h2v1h-2zM8 8h1v1h-1zM13 8h1v1h-1zM15 8h1v1h-1zM20 8h1v1h-1zM26 8h1v1h-1zM29 8h3v1h-3zM34 8h1v1h-1zM0 9h1v1h-1zM2 9h1v1h-1zM4 9h2v1h-2zM7 9h3v1h-3zM14 9h1v1h-1zM16 9h2v1h-2zM19 9h1v1h-1zM25 9h2v1h-2zM29 9h1v1h-1zM34 9h1v1h-1zM1 10h1v1h-1zM3 10h1v1h-1zM5 10h2v1h-2zM9 10h1v1h-1zM11 10h1v1h-1zM13 10h1v1h-1zM16 10h4v1h-4zM22 10h3v1h-3zM27 10h1v1h-1zM29 10h3v1h-3zM33 10h2v1h-2zM1 11h1v1h-1zM3 11h4v1h-4zM8 11h3v1h-3zM12 11h2v1h-2zM20 11h1v1h-1zM24 11h2v1h-2zM27 11h1v1h-1zM30 11h2v1h-2zM33 11h2v1h-2zM1 12h1v1h-1zM3 12h2v1h-2zM6 12h2v1h-2zM11 12h2v1h-2zM14 12h1v1h-1zM16 12h4v1h-4zM21 12h1v1h-1zM23 12h3v1h-3zM29 12h2v1h-2zM32 12h1v1h-1zM34 12h1v1h-1zM0 13h3v1h-3zM4 13h1v1h-1zM7 13h2v1h-2zM10 13h5v1h-5zM20 13h1v1h-1zM22 13h1v1h-1zM25 13h1v1h-1zM30 13h1v1h-1zM1 14h1v1h-1zM3 14h5v1h-5zM10 14h1v1h-1zM13 14h1v1h-1zM17 14h1v1h-1zM23 14h1v1h-1zM26 14h7v1h-7zM0 15h1v1h-1zM6 15h1v1h-1zM9 15h1v1h-1zM11 15h4v1h-4zM16 15h1v1h-1zM18 15h1v1h-1zM21 15h2v1h-2zM25 15h1v1h-1zM27 15h5v1h-5zM33 15h1v1h-1zM1 16h1v1h-1zM4 16h1v1h-1zM6 16h2v1h-2zM9 16h1v1h-1zM13 16h1v1h-1zM17 16h1v1h-1zM19 16h3v1h-3zM23 16h2v1h-2zM26 16h2v1h-2zM29 16h1v1h-1zM0 17h2v1h-2zM5 17h2v1h-2zM12 17h2v1h-2zM17 17h4v1h-4zM22 17h1v1h-1zM24 17h2v1h-2zM29 17h4v1h-4zM0 18h2v1h-2zM5 18h3v1h-3zM9 18h1v1h-1zM12 18h1v1h-1zM16 18h3v1h-3zM20 18h2v1h-2zM23 18h1v1h-1zM25 18h1v1h-1zM27 18h2v1h-2zM30 18h2v1h-2zM34 18h1v1h-1zM0 19h2v1h-2zM3 19h2v1h-2zM10 19h1v1h-1zM12 19h3v1h-3zM17 19h7v1h-7zM29 19h1v1h-1zM32 19h3v1h-3zM5 20h1v1h-1zM8 20h2v1h-2zM12 20h1v1h-1zM14 20h1v1h-1zM17 20h2v1h-2zM22 20h2v1h-2zM26 20h1v1h-1zM31 20h1v1h-1zM8 21h3v1h-3zM13 21h5v1h-5zM19 21h3v1h-3zM24 21h3v1h-3zM29 21h5v1h-5zM1 22h4v1h-4zM6 22h1v1h-1zM9 22h2v1h-2zM13 22h1v1h-1zM16 22h3v1h-3zM21 22h1v1h-1zM23 22h2v1h-2zM27 22h4v1h-4zM34 22h1v1h-1zM0 23h3v1h-3zM4 23h1v1h-1zM7 23h1v1h-1zM9 23h1v1h-1zM11 23h1v1h-1zM15 23h2v1h-2zM18 23h3v1h-3zM24 23h1v1h-1zM26 23h1v1h-1zM28 23h1v1h-1zM30 23h1v1h-1zM33 23h1v1h-1zM0 24h5v1h-5zM6 24h1v1h-1zM8 24h3v1h-3zM14 24h2v1h-2zM17 24h1v1h-1zM19 24h2v1h-2zM23 24h1v1h-1zM25 24h2v1h-2zM28 24h3v1h-3zM32 24h2v1h-2zM0 25h1v1h-1zM4 25h1v1h-1zM6 25h3v1h-3zM11 25h2v1h-2zM15 25h6v1h-6zM22 25h2v1h-2zM27 25h5v1h-5zM2 26h3v1h-3zM6 26h3v1h-3zM12 26h1v1h-1zM16 26h3v1h-3zM21 26h1v1h-1zM24 26h1v1h-1zM26 26h5v1h-5zM32 26h1v1h-1zM34 26h1v1h-1zM8 27h1v1h-1zM13 27h1v1h-1zM15 27h1v1h-1zM17 27h1v1h-1zM20 27h1v1h-1zM22 27h3v1h-3zM26 27h1v1h-1zM30 27h2v1h-2zM34 27h1v1h-1zM0 28h7v1h-7zM9 28h1v1h-1zM11 28h1v1h-1zM13 28h1v1h-1zM16 28h2v1h-2zM22 28h1v1h-1zM26 28h1v1h-1zM28 28h1v1h-1zM30 28h1v1h-1zM32 28h1v1h-1zM34 28h1v1h-1zM0 29h1v1h-1zM6 29h1v1h-1zM8 29h6v1h-6zM16 29h5v1h-5zM25 29h2v1h-2zM30 29h2v1h-2zM33 29h1v1h-1zM0 30h1v1h-1zM2 30h3v1h-3zM6 30h1v1h-1zM8 30h2v1h-2zM11 30h2v1h-2zM14 30h2v1h-2zM18 30h3v1h-3zM23 30h1v1h-1zM25 30h6v1h-6zM32 30h1v1h-1zM34 30h1v1h-1zM0 31h1v1h-1zM2 31h3v1h-3zM6 31h1v1h-1zM9 31h4v1h-4zM14 31h3v1h-3zM19 31h1v1h-1zM23 31h2v1h-2zM27 31h1v1h-1zM29 31h1v1h-1zM31 31h1v1h-1zM34 31h1v1h-1zM0 32h1v1h-1zM2 32h3v1h-3zM6 32h1v1h-1zM8 32h1v1h-1zM10 32h1v1h-1zM13 32h2v1h-2zM16 32h1v1h-1zM18 32h2v1h-2zM22 32h1v1h-1zM25 32h2v1h-2zM31 32h1v1h-1zM33 32h1v1h-1zM0 33h1v1h-1zM6 33h1v1h-1zM9 33h2v1h-2zM15 33h7v1h-7zM23 33h1v1h-1zM28 33h5v1h-5zM0 34h7v1h-7zM10 34h4v1h-4zM15 34h2v1h-2zM19 34h2v1h-2zM22 34h2v1h-2zM25 34h6v1h-6zM34 34h1v1h-1z" fill="#111"></path></svg><div class="abs nw" style="left:84.3px;top:9.2px;font-size:16.3px;line-height:20px;color:#fff;transform:scaleX(0.8408);transform-origin:0 50%;font-weight:bold">Shopee 绿色开店通道</div><div class="abs nw" style="left:86.3px;top:35.3px;font-size:11.6px;line-height:14px;color:#fff;transform:scaleX(0.855);transform-origin:0 50%;font-family:'Liberation Serif','Noto Serif CJK SC',serif;-webkit-text-stroke:.35px #fff">绿色通道申请只需要 3 天就可以有账号了</div><div class="abs nw" style="left:88.2px;top:52px;font-size:11.5px;line-height:14px;color:#fff;transform:scaleX(0.855);transform-origin:0 50%;font-family:'Liberation Serif','Noto Serif CJK SC',serif;-webkit-text-stroke:.35px #fff">扫一扫二维码或直接点击 <span style="color:#f2491f;font-weight:bold;font-style:italic;font-size:12.6px;font-family:'Liberation Sans','Noto Sans CJK SC',sans-serif;-webkit-text-stroke:0 #f2491f;margin-left:.6px">立即开店</span></div></div>
  <div class="abs" style="left:17px;top:116.5px;width:287.5px;height:76.5px;border-radius:2px;background:linear-gradient(#fff,#fff) 0 0/71px 100% no-repeat,linear-gradient(90deg,#ff8412 25%,#ff9a1c 45%,#ffbc30 72%,#ffd43f 100%);box-shadow:0 1.5px 2px rgba(0,0,0,.55);overflow:hidden"><div class="abs" style="left:0;top:0;width:72px;height:76.5px;background:#fff"></div><svg class="abs" style="left:8.0px;top:6.5px" width="56.2" height="65.8" viewBox="0 0 35 35" preserveAspectRatio="none" shape-rendering="crispEdges"><path d="M0 0h7v1h-7zM9 0h1v1h-1zM11 0h1v1h-1zM17 0h1v1h-1zM20 0h2v1h-2zM28 0h7v1h-7zM0 1h1v1h-1zM6 1h1v1h-1zM9 1h3v1h-3zM14 1h2v1h-2zM17 1h1v1h-1zM20 1h1v1h-1zM23 1h1v1h-1zM25 1h2v1h-2zM28 1h1v1h-1zM34 1h1v1h-1zM0 2h1v1h-1zM2 2h3v1h-3zM6 2h1v1h-1zM9 2h1v1h-1zM11 2h2v1h-2zM15 2h1v1h-1zM17 2h1v1h-1zM22 2h1v1h-1zM25 2h1v1h-1zM28 2h1v1h-1zM30 2h3v1h-3zM34 2h1v1h-1zM0 3h1v1h-1zM2 3h3v1h-3zM6 3h1v1h-1zM8 3h1v1h-1zM10 3h6v1h-6zM19 3h2v1h-2zM22 3h4v1h-4zM28 3h1v1h-1zM30 3h3v1h-3zM34 3h1v1h-1zM0 4h1v1h-1zM2 4h3v1h-3zM6 4h1v1h-1zM9 4h1v1h-1zM13 4h1v1h-1zM15 4h2v1h-2zM19 4h2v1h-2zM22 4h1v1h-1zM26 4h1v1h-1zM28 4h1v1h-1zM30 4h3v1h-3zM34 4h1v1h-1zM0 5h1v1h-1zM6 5h1v1h-1zM8 5h6v1h-6zM15 5h1v1h-1zM21 5h1v1h-1zM26 5h1v1h-1zM28 5h1v1h-1zM34 5h1v1h-1zM0 6h7v1h-7zM8 6h3v1h-3zM12 6h10v1h-10zM23 6h1v1h-1zM28 6h7v1h-7zM8 7h3v1h-3zM13 7h1v1h-1zM15 7h1v1h-1zM19 7h6v1h-6zM26 7h1v1h-1zM2 8h2v1h-2zM5 8h2v1h-2zM10 8h1v1h-1zM13 8h1v1h-1zM18 8h1v1h-1zM20 8h1v1h-1zM22 8h1v1h-1zM25 8h3v1h-3zM29 8h1v1h-1zM31 8h1v1h-1zM33 8h1v1h-1zM1 9h3v1h-3zM5 9h3v1h-3zM9 9h1v1h-1zM11 9h11v1h-11zM24 9h2v1h-2zM27 9h3v1h-3zM34 9h1v1h-1zM0 10h1v1h-1zM2 10h1v1h-1zM4 10h3v1h-3zM8 10h1v1h-1zM11 10h1v1h-1zM15 10h1v1h-1zM18 10h3v1h-3zM23 10h2v1h-2zM27 10h2v1h-2zM30 10h1v1h-1zM32 10h1v1h-1zM34 10h1v1h-1zM0 11h4v1h-4zM7 11h1v1h-1zM10 11h7v1h-7zM18 11h1v1h-1zM21 11h1v1h-1zM26 11h4v1h-4zM32 11h3v1h-3zM0 12h4v1h-4zM5 12h1v1h-1zM7 12h2v1h-2zM10 12h2v1h-2zM23 12h4v1h-4zM29 12h3v1h-3zM33 12h2v1h-2zM1 13h1v1h-1zM5 13h7v1h-7zM24 13h1v1h-1zM26 13h2v1h-2zM29 13h3v1h-3zM33 13h2v1h-2zM0 14h1v1h-1zM2 14h2v1h-2zM5 14h2v1h-2zM10 14h2v1h-2zM22 14h1v1h-1zM26 14h1v1h-1zM29 14h4v1h-4zM34 14h1v1h-1zM2 15h4v1h-4zM24 15h2v1h-2zM30 15h1v1h-1zM32 15h2v1h-2zM0 16h6v1h-6zM7 16h3v1h-3zM22 16h1v1h-1zM28 16h2v1h-2zM32 16h1v1h-1zM34 16h1v1h-1zM0 17h2v1h-2zM4 17h8v1h-8zM22 17h2v1h-2zM26 17h4v1h-4zM31 17h1v1h-1zM0 18h4v1h-4zM5 18h1v1h-1zM9 18h1v1h-1zM24 18h1v1h-1zM28 18h1v1h-1zM0 19h3v1h-3zM4 19h2v1h-2zM7 19h5v1h-5zM22 19h1v1h-1zM24 19h1v1h-1zM26 19h1v1h-1zM28 19h1v1h-1zM30 19h1v1h-1zM32 19h2v1h-2zM0 20h3v1h-3zM8 20h3v1h-3zM22 20h1v1h-1zM24 20h2v1h-2zM27 20h2v1h-2zM30 20h3v1h-3zM0 21h2v1h-2zM11 21h1v1h-1zM23 21h1v1h-1zM26 21h5v1h-5zM32 21h1v1h-1zM34 21h1v1h-1zM3 22h1v1h-1zM6 22h3v1h-3zM11 22h4v1h-4zM18 22h1v1h-1zM21 22h1v1h-1zM28 22h1v1h-1zM30 22h3v1h-3zM0 23h2v1h-2zM3 23h1v1h-1zM5 23h1v1h-1zM7 23h1v1h-1zM9 23h9v1h-9zM19 23h1v1h-1zM22 23h1v1h-1zM25 23h2v1h-2zM28 23h2v1h-2zM31 23h4v1h-4zM1 24h7v1h-7zM13 24h1v1h-1zM15 24h1v1h-1zM17 24h1v1h-1zM22 24h1v1h-1zM26 24h1v1h-1zM29 24h2v1h-2zM33 24h1v1h-1zM0 25h1v1h-1zM5 25h1v1h-1zM7 25h1v1h-1zM11 25h1v1h-1zM13 25h4v1h-4zM18 25h4v1h-4zM23 25h1v1h-1zM25 25h2v1h-2zM28 25h2v1h-2zM31 25h1v1h-1zM0 26h1v1h-1zM3 26h3v1h-3zM7 26h1v1h-1zM11 26h1v1h-1zM13 26h3v1h-3zM17 26h3v1h-3zM21 26h3v1h-3zM26 26h5v1h-5zM33 26h1v1h-1zM10 27h2v1h-2zM14 27h2v1h-2zM18 27h1v1h-1zM22 27h2v1h-2zM26 27h1v1h-1zM30 27h1v1h-1zM33 27h2v1h-2zM0 28h7v1h-7zM9 28h1v1h-1zM15 28h2v1h-2zM18 28h1v1h-1zM20 28h1v1h-1zM22 28h1v1h-1zM26 28h1v1h-1zM28 28h1v1h-1zM30 28h2v1h-2zM33 28h1v1h-1zM0 29h1v1h-1zM6 29h1v1h-1zM8 29h1v1h-1zM10 29h3v1h-3zM20 29h2v1h-2zM24 29h3v1h-3zM30 29h2v1h-2zM33 29h2v1h-2zM0 30h1v1h-1zM2 30h3v1h-3zM6 30h1v1h-1zM8 30h1v1h-1zM10 30h2v1h-2zM14 30h3v1h-3zM18 30h3v1h-3zM25 30h6v1h-6zM32 30h3v1h-3zM0 31h1v1h-1zM2 31h3v1h-3zM6 31h1v1h-1zM11 31h2v1h-2zM15 31h1v1h-1zM19 31h1v1h-1zM21 31h7v1h-7zM32 31h2v1h-2zM0 32h1v1h-1zM2 32h3v1h-3zM6 32h1v1h-1zM8 32h1v1h-1zM10 32h2v1h-2zM13 32h2v1h-2zM20 32h2v1h-2zM23 32h6v1h-6zM30 32h4v1h-4zM0 33h1v1h-1zM6 33h1v1h-1zM8 33h1v1h-1zM11 33h3v1h-3zM15 33h2v1h-2zM20 33h1v1h-1zM23 33h1v1h-1zM25 33h2v1h-2zM29 33h1v1h-1zM32 33h1v1h-1zM34 33h1v1h-1zM0 34h7v1h-7zM8 34h3v1h-3zM22 34h1v1h-1zM29 34h1v1h-1zM32 34h3v1h-3z" fill="#111"></path></svg><div class="abs" style="left:28.7px;top:30.7px;width:14.6px;height:17.4px;background:#fff"><div class="abs" style="left:2.6px;top:5.4px;width:9.4px;height:3.4px;border-top:1.2px solid #e23b2a;border-radius:50%"></div><div class="abs" style="left:2.6px;top:8.6px;width:9.4px;height:2.2px;background:#444;opacity:.75"></div></div><div class="abs nw" style="left:84.3px;top:13px;font-size:15.5px;line-height:20px;color:#fff;transform:scaleX(0.8408);transform-origin:0 50%;font-weight:bold;letter-spacing:1.35px">Kilimall 绿色开店通道</div><div class="abs nw" style="left:84.0px;top:37.8px;font-size:10.4px;line-height:13px;color:#fff4dc;transform:scaleX(0.8408);transform-origin:0 50%;letter-spacing:.37px;font-size:10.25px">绿色通道申请只需要 1 天就可以有账号了！</div><div class="abs nw" style="left:84.0px;top:55px;font-size:10.4px;line-height:13px;color:#fff4dc;transform:scaleX(0.8408);transform-origin:0 50%;letter-spacing:0;font-size:10.25px">扫描二维码或直接点击 <span style="color:#f21d10;font-weight:bold;font-size:10.6px;margin-left:2px">我要开店</span></div></div>
  <div class="abs" style="left:17px;top:213.3px;width:287.5px;height:76.0px;border-radius:2px;background:linear-gradient(#fff,#fff) 0 0/61px 100% no-repeat,linear-gradient(90deg,#2a5ec2 22%,#2f6ecb 50%,#3a8bd7 100%);box-shadow:0 1.5px 2px rgba(0,0,0,.55);overflow:hidden"><div class="abs" style="left:0;top:0;width:62px;height:76px;background:#fff"></div><svg class="abs" style="left:1.0px;top:1.2px" width="60.7" height="73.4" viewBox="0 0 33 33" preserveAspectRatio="none" shape-rendering="crispEdges"><path d="M0 0h7v1h-7zM10 0h1v1h-1zM13 0h1v1h-1zM16 0h4v1h-4zM22 0h1v1h-1zM26 0h7v1h-7zM0 1h1v1h-1zM6 1h1v1h-1zM8 1h4v1h-4zM15 1h8v1h-8zM24 1h1v1h-1zM26 1h1v1h-1zM32 1h1v1h-1zM0 2h1v1h-1zM2 2h3v1h-3zM6 2h1v1h-1zM9 2h2v1h-2zM12 2h2v1h-2zM16 2h4v1h-4zM22 2h3v1h-3zM26 2h1v1h-1zM28 2h3v1h-3zM32 2h1v1h-1zM0 3h1v1h-1zM2 3h3v1h-3zM6 3h1v1h-1zM9 3h1v1h-1zM13 3h3v1h-3zM18 3h2v1h-2zM21 3h1v1h-1zM26 3h1v1h-1zM28 3h3v1h-3zM32 3h1v1h-1zM0 4h1v1h-1zM2 4h3v1h-3zM6 4h1v1h-1zM13 4h2v1h-2zM17 4h8v1h-8zM26 4h1v1h-1zM28 4h3v1h-3zM32 4h1v1h-1zM0 5h1v1h-1zM6 5h1v1h-1zM9 5h4v1h-4zM14 5h3v1h-3zM18 5h2v1h-2zM23 5h1v1h-1zM26 5h1v1h-1zM32 5h1v1h-1zM0 6h7v1h-7zM10 6h1v1h-1zM14 6h3v1h-3zM18 6h7v1h-7zM26 6h7v1h-7zM9 7h3v1h-3zM14 7h2v1h-2zM17 7h3v1h-3zM21 7h1v1h-1zM0 8h4v1h-4zM5 8h1v1h-1zM10 8h1v1h-1zM12 8h3v1h-3zM17 8h1v1h-1zM19 8h3v1h-3zM23 8h7v1h-7zM0 9h1v1h-1zM2 9h4v1h-4zM8 9h2v1h-2zM11 9h4v1h-4zM16 9h1v1h-1zM18 9h1v1h-1zM21 9h1v1h-1zM25 9h2v1h-2zM28 9h2v1h-2zM31 9h1v1h-1zM1 10h1v1h-1zM3 10h2v1h-2zM7 10h1v1h-1zM9 10h1v1h-1zM11 10h1v1h-1zM13 10h1v1h-1zM19 10h1v1h-1zM29 10h1v1h-1zM31 10h1v1h-1zM4 11h2v1h-2zM8 11h2v1h-2zM12 11h3v1h-3zM17 11h1v1h-1zM19 11h2v1h-2zM23 11h1v1h-1zM25 11h2v1h-2zM28 11h3v1h-3zM32 11h1v1h-1zM0 12h1v1h-1zM3 12h1v1h-1zM9 12h5v1h-5zM15 12h5v1h-5zM22 12h1v1h-1zM24 12h2v1h-2zM28 12h1v1h-1zM30 12h3v1h-3zM4 13h1v1h-1zM10 13h2v1h-2zM13 13h5v1h-5zM19 13h2v1h-2zM23 13h1v1h-1zM25 13h3v1h-3zM2 14h2v1h-2zM9 14h3v1h-3zM14 14h3v1h-3zM20 14h2v1h-2zM23 14h2v1h-2zM26 14h2v1h-2zM31 14h1v1h-1zM1 15h2v1h-2zM4 15h1v1h-1zM7 15h1v1h-1zM10 15h1v1h-1zM13 15h2v1h-2zM18 15h2v1h-2zM22 15h4v1h-4zM28 15h1v1h-1zM30 15h1v1h-1zM3 16h2v1h-2zM6 16h1v1h-1zM8 16h2v1h-2zM11 16h3v1h-3zM15 16h2v1h-2zM20 16h1v1h-1zM23 16h1v1h-1zM25 16h1v1h-1zM27 16h1v1h-1zM29 16h4v1h-4zM0 17h1v1h-1zM2 17h1v1h-1zM4 17h2v1h-2zM9 17h2v1h-2zM12 17h5v1h-5zM19 17h1v1h-1zM25 17h1v1h-1zM28 17h2v1h-2zM2 18h1v1h-1zM5 18h1v1h-1zM8 18h2v1h-2zM12 18h1v1h-1zM15 18h1v1h-1zM17 18h1v1h-1zM20 18h7v1h-7zM28 18h3v1h-3zM32 18h1v1h-1zM0 19h1v1h-1zM3 19h1v1h-1zM5 19h1v1h-1zM7 19h1v1h-1zM9 19h1v1h-1zM13 19h2v1h-2zM18 19h3v1h-3zM22 19h1v1h-1zM24 19h1v1h-1zM28 19h1v1h-1zM30 19h2v1h-2zM0 20h1v1h-1zM2 20h4v1h-4zM7 20h1v1h-1zM9 20h1v1h-1zM11 20h1v1h-1zM16 20h1v1h-1zM18 20h1v1h-1zM25 20h1v1h-1zM28 20h4v1h-4zM2 21h1v1h-1zM10 21h1v1h-1zM12 21h9v1h-9zM23 21h1v1h-1zM26 21h1v1h-1zM29 21h1v1h-1zM2 22h1v1h-1zM5 22h2v1h-2zM8 22h1v1h-1zM10 22h1v1h-1zM14 22h2v1h-2zM19 22h1v1h-1zM21 22h1v1h-1zM23 22h1v1h-1zM26 22h1v1h-1zM28 22h4v1h-4zM0 23h1v1h-1zM2 23h2v1h-2zM5 23h1v1h-1zM9 23h1v1h-1zM12 23h1v1h-1zM14 23h2v1h-2zM18 23h3v1h-3zM22 23h1v1h-1zM25 23h2v1h-2zM30 23h2v1h-2zM3 24h1v1h-1zM5 24h5v1h-5zM11 24h2v1h-2zM14 24h1v1h-1zM22 24h1v1h-1zM24 24h5v1h-5zM31 24h2v1h-2zM11 25h4v1h-4zM16 25h1v1h-1zM20 25h2v1h-2zM23 25h2v1h-2zM28 25h2v1h-2zM31 25h2v1h-2zM0 26h7v1h-7zM9 26h1v1h-1zM11 26h2v1h-2zM15 26h3v1h-3zM19 26h4v1h-4zM24 26h1v1h-1zM26 26h1v1h-1zM28 26h3v1h-3zM32 26h1v1h-1zM0 27h1v1h-1zM6 27h1v1h-1zM8 27h1v1h-1zM11 27h5v1h-5zM19 27h6v1h-6zM28 27h2v1h-2zM31 27h2v1h-2zM0 28h1v1h-1zM2 28h3v1h-3zM6 28h1v1h-1zM8 28h3v1h-3zM12 28h1v1h-1zM17 28h1v1h-1zM19 28h1v1h-1zM22 28h1v1h-1zM24 28h5v1h-5zM30 28h1v1h-1zM32 28h1v1h-1zM0 29h1v1h-1zM2 29h3v1h-3zM6 29h1v1h-1zM8 29h2v1h-2zM11 29h1v1h-1zM13 29h1v1h-1zM17 29h3v1h-3zM21 29h2v1h-2zM28 29h1v1h-1zM30 29h1v1h-1zM32 29h1v1h-1zM0 30h1v1h-1zM2 30h3v1h-3zM6 30h1v1h-1zM8 30h3v1h-3zM12 30h1v1h-1zM14 30h1v1h-1zM16 30h2v1h-2zM19 30h2v1h-2zM22 30h1v1h-1zM25 30h3v1h-3zM29 30h1v1h-1zM0 31h1v1h-1zM6 31h1v1h-1zM9 31h1v1h-1zM12 31h4v1h-4zM17 31h1v1h-1zM19 31h1v1h-1zM24 31h4v1h-4zM29 31h1v1h-1zM32 31h1v1h-1zM0 32h7v1h-7zM8 32h2v1h-2zM12 32h1v1h-1zM17 32h4v1h-4zM22 32h1v1h-1zM24 32h1v1h-1zM26 32h1v1h-1zM31 32h1v1h-1z" fill="#111"></path></svg><div class="abs nw" style="left:230.2px;top:0.7px;font-size:21px;line-height:22px;color:#fff;transform:scaleX(0.56);transform-origin:0 50%;letter-spacing:1.7px">pingpong</div><div class="abs nw" style="left:71.3px;top:28.4px;font-size:11.33px;line-height:14px;color:#fff;transform:scaleX(0.885);transform-origin:0 50%;font-family:'Liberation Serif','Noto Serif CJK SC',serif;font-weight:bold">做跨境用PingPong领先收款服务, 即刻注册并</div><div class="abs nw" style="left:106.6px;top:45.5px;font-size:11.5px;line-height:18px;color:#fff;transform:scaleX(0.885);transform-origin:0 50%;font-family:'Liberation Serif','Noto Serif CJK SC',serif;font-weight:bold">领取<span style="color:#ffd21e;font-size:15.5px;font-weight:normal;font-family:'Liberation Sans','Noto Sans CJK SC',sans-serif">3000美金</span>免费提现额度</div></div>
  <div class="abs" style="left:17px;top:309.2px;width:287.5px;height:72.0px;border-radius:2px;background:#2ab;box-shadow:0 1.5px 2px rgba(0,0,0,.55);overflow:hidden"><svg class="abs" style="left:0;top:0" width="288" height="72" viewBox="1261 834.7 288 72">
<defs><linearGradient id="b4" x1="0" y1="0" x2="1" y2="0"><stop offset="0" stop-color="#25d0d6"></stop><stop offset=".28" stop-color="#4cc6ca"></stop><stop offset=".5" stop-color="#84c4c6"></stop><stop offset=".64" stop-color="#7bb8ba"></stop><stop offset=".7" stop-color="#4f8f92"></stop><stop offset="1" stop-color="#2c6266"></stop></linearGradient></defs>
<rect x="1261" y="834.7" width="288" height="72" fill="url(#b4)"></rect>
<path d="M1436 907 L1442 880 Q1447 852 1458 838 L1461 834.7 L1549 834.7 L1549 907z" fill="#2f6769"></path>
<path d="M1486 834.7 L1549 834.7 L1549 907 L1478 907 L1484 870z" fill="#1f4e52"></path>
<path d="M1474 834.7 L1485 834.7 L1478 872 L1470 900z" fill="#86bcbc" opacity=".75"></path>
<path d="M1470 900 L1478 872 L1484 848 L1494 866 L1486 907 L1468 907z" fill="#5f9e9e" opacity=".55"></path>
<path d="M1444 907 L1462 872 L1470 900 L1468 907z" fill="#5f9e9e" opacity=".5"></path>
<path d="M1478 907 L1494 872 L1510 880 L1514 907z" fill="#6aa5a5" opacity=".45"></path>
<path d="M1491 852 Q1493 848 1500 850 L1512 854 L1510 866 L1498 866 Q1490 860 1491 852z" fill="#8a7e72"></path>
<path d="M1510 866 Q1508 850 1516 845 Q1524 843 1530 852 L1536 866 Q1540 884 1534 907 L1496 907 Q1490 896 1496 884 L1508 878z" fill="#a59c7a"></path>
<path d="M1508 870 Q1520 866 1532 872 M1504 880 Q1518 876 1534 884 M1500 890 Q1516 886 1534 896" fill="none" stroke="#8b8467" stroke-width=".9" opacity=".8"></path>
<ellipse cx="1518.6" cy="848.6" rx="3.6" ry="4.6" fill="#f4f1e0"></ellipse><ellipse cx="1518.6" cy="848.6" rx="5.4" ry="6.4" fill="#fff" opacity=".25"></ellipse>
<path d="M1468 905 Q1490 892 1500 872 Q1508 856 1514 846" fill="none" stroke="#e6fafa" stroke-width="1" opacity=".9"></path>
<path d="M1456 896 L1470 882 L1478 890 L1484 878 L1494 888" fill="none" stroke="#cfeeee" stroke-width=".7" opacity=".7"></path>
<path d="M1494 892 L1504 874 L1514 866" fill="none" stroke="#cfeeee" stroke-width=".7" opacity=".7"></path>
<g fill="#e8ffff" opacity=".85"><ellipse cx="1494.5" cy="871.5" rx=".9" ry="1"></ellipse><ellipse cx="1504.5" cy="871.5" rx=".9" ry="1"></ellipse><ellipse cx="1514" cy="871.5" rx=".9" ry="1"></ellipse><ellipse cx="1476.5" cy="881" rx=".9" ry="1"></ellipse><ellipse cx="1456.5" cy="892.5" rx=".9" ry="1"></ellipse></g>
<rect x="1494" y="845.4" width="6.6" height="4.8" rx=".8" fill="#bdeff0"></rect><rect x="1462.4" y="861" width="6.2" height="4.6" rx=".8" fill="#bdeff0" opacity=".9"></rect>
<path d="M1294 881 H1306 M1386 881 H1398" stroke="#eaffff" stroke-width=".6"></path>
<rect x="1308" y="879.6" width="76" height="2.8" fill="#eaffff" opacity=".38"></rect>
<g fill="#1ee0ea"><rect x="1294" y="887" width="22" height="7"></rect><rect x="1322" y="887" width="21.5" height="7"></rect><rect x="1349" y="887" width="22" height="7"></rect><rect x="1376" y="887" width="22" height="7"></rect></g>
<g fill="#fff" opacity=".9"><rect x="1301" y="889.4" width="12" height="2.6"></rect><rect x="1329" y="889.4" width="12" height="2.6"></rect><rect x="1356" y="889.4" width="12" height="2.6"></rect><rect x="1383" y="889.4" width="12" height="2.6"></rect></g>
<g fill="none" stroke="#fff" stroke-width=".7"><ellipse cx="1297.6" cy="890.6" rx="1.6" ry="2"></ellipse><ellipse cx="1325.6" cy="890.6" rx="1.6" ry="2"></ellipse><ellipse cx="1352.6" cy="890.6" rx="1.6" ry="2"></ellipse><ellipse cx="1379.6" cy="890.6" rx="1.6" ry="2"></ellipse></g>
<rect x="1294" y="896.8" width="105" height="3.2" fill="#eaffff" opacity=".28"></rect>
</svg><div class="abs nw" style="left:32.4px;top:8.5px;font-size:15px;line-height:18px;color:#fff;transform:scaleX(0.785);transform-origin:0 50%;"><b style="font-size:18px;line-height:10px;position:relative;top:2px">“</b>团队精简30%效率提高50%</div><div class="abs nw" style="left:33.2px;top:26.3px;font-size:14.4px;line-height:18px;color:#fff;transform:scaleX(0.8);transform-origin:0 50%;font-weight:bold;-webkit-text-stroke:.3px #fff">竟然都是因为1688跨境超级买家</div></div>
</div>

<div class="abs" style="left:1567px;top:430.3px;width:33px;height:39.4px;background:#2d87f0;box-shadow:0 2px 10px rgba(0,0,0,.35)"><svg class="abs" style="left:8px;top:9px" width="19" height="21" viewBox="0 0 19 21"><path d="M9.5 1.2 C14 1.2 17 4.8 17 9.6 C17 14.4 14 18 9.5 18 C8.3 18 7.2 17.7 6.2 17.2 L3.2 18.6 L3.8 15.2 C2.6 13.7 2 11.8 2 9.6 C2 4.8 5 1.2 9.5 1.2z" fill="#fff"></path><ellipse cx="6.2" cy="9.8" rx="1.1" ry="1.2" fill="#2d87f0"></ellipse><ellipse cx="9.6" cy="9.8" rx="1.1" ry="1.2" fill="#2d87f0"></ellipse><ellipse cx="13" cy="9.8" rx="1.1" ry="1.2" fill="#2d87f0"></ellipse></svg></div>


</body></html>
